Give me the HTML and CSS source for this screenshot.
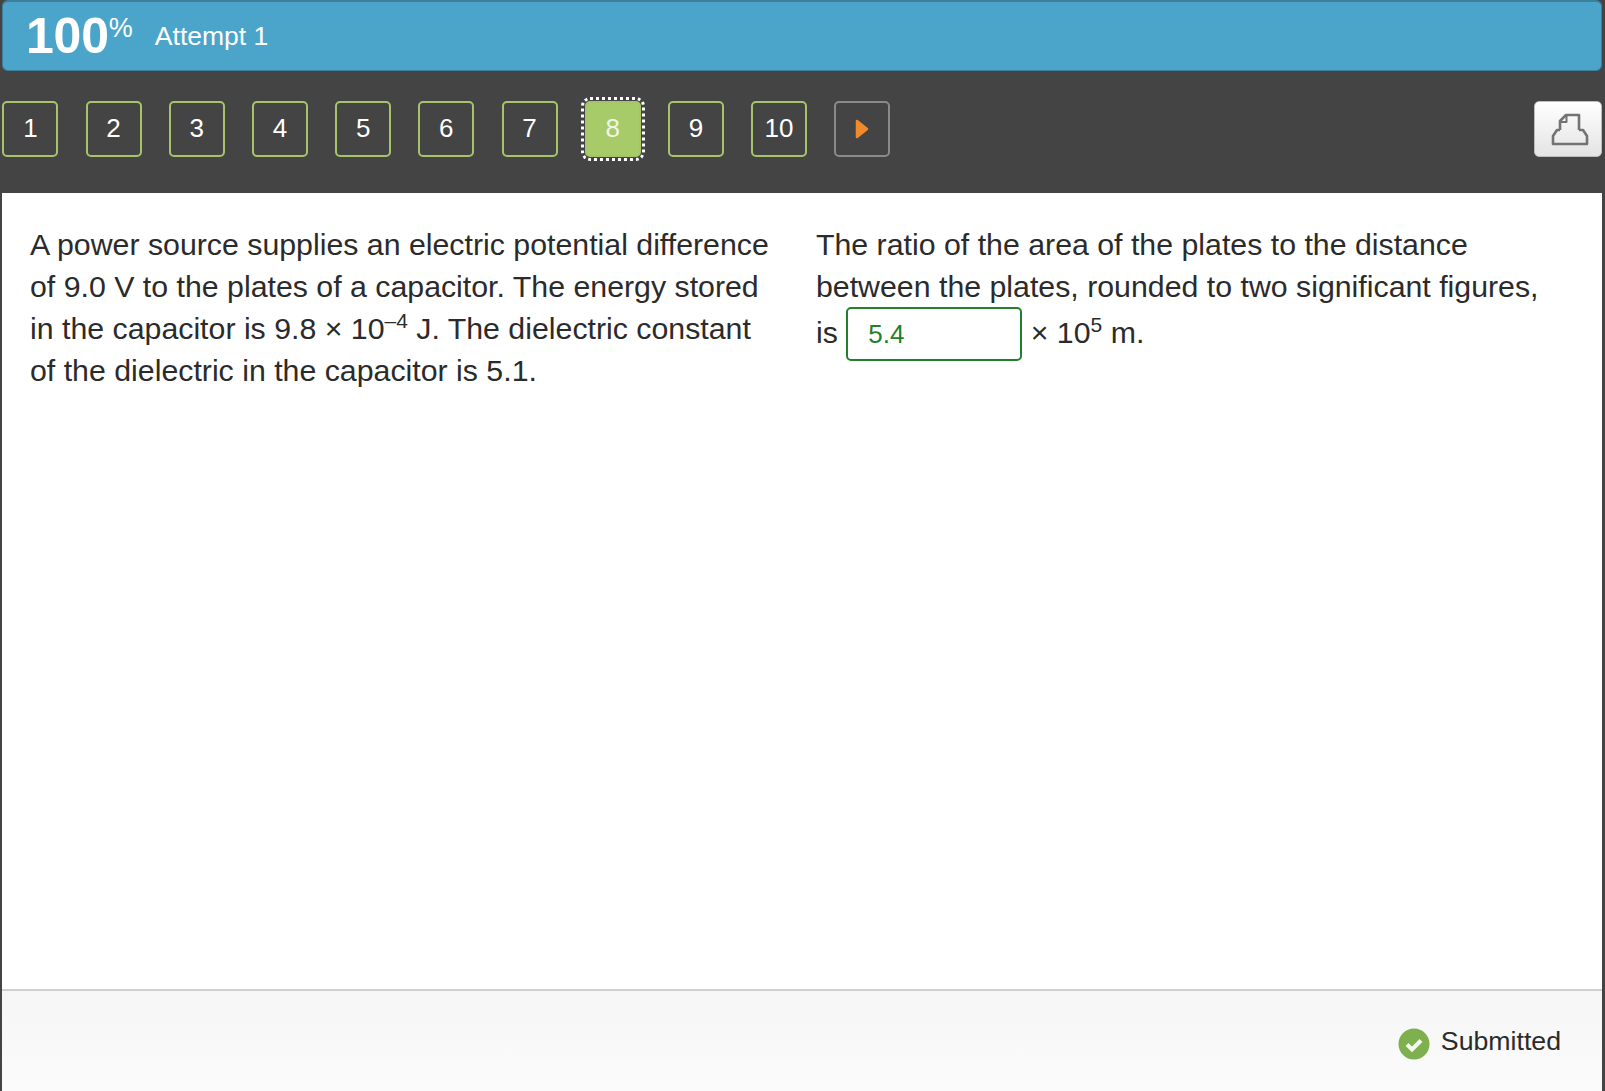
FILE: index.html
```html
<!DOCTYPE html>
<html lang="en">
<head>
    <meta charset="UTF-8">
    <meta name="viewport" content="width=device-width, initial-scale=1.0">
    <title>Attempt 1</title>
    <link rel="stylesheet" href="styles.css">
</head>
<body>
    <div class="score-bar">
        <div class="score">100<span class="score-unit">%</span></div>
        <div class="attempt">Attempt 1</div>
    </div>

    <div class="nav">
        <div class="pages">
            <button class="page">1</button>
            <button class="page">2</button>
            <button class="page">3</button>
            <button class="page">4</button>
            <button class="page">5</button>
            <button class="page">6</button>
            <button class="page">7</button>
            <button class="page current">8</button>
            <button class="page">9</button>
            <button class="page">10</button>
            <button class="page next" aria-label="Next">
                <svg width="14" height="20" viewBox="0 0 14 20"><path d="M2 2 L12 10 L2 18 Z" fill="#f08a2c" stroke="#f08a2c" stroke-width="2.5" stroke-linejoin="round"/></svg>
            </button>
        </div>
        <button class="print" aria-label="Print">
            <svg class="print-icon" width="38" height="33" viewBox="0 0 38 33" fill="none" stroke="#737373" stroke-width="2.6" stroke-linejoin="round">
                <path d="M9 17 V8 L15 2 H28 V17"/>
                <path d="M9 9 H15.5 V2" stroke-width="2"/>
                <path d="M9 17 H6 L2 23 V31 H36 V23 L32 17 H28"/>
            </svg>
        </button>
    </div>

    <div class="card">
        <div class="question">
            <p>A power source supplies an electric potential difference of 9.0 V to the plates of a capacitor. The energy stored in the capacitor is 9.8 × 10<sup>–4</sup> J. The dielectric constant of the dielectric in the capacitor is 5.1.</p>
            <p>The ratio of the area of the plates to the distance between the plates, rounded to two significant figures, is <span class="answer">5.4</span> × 10<sup>5</sup> m.</p>
        </div>
        <div class="footer">
            <svg class="check" width="32" height="32" viewBox="0 0 32 32">
                <circle cx="16" cy="16" r="15.5" fill="#7fb04f"/>
                <path d="M9 16.5 L14 21.5 L23 12.5" fill="none" stroke="#f4f8ee" stroke-width="4"/>
            </svg>
            <span>Submitted</span>
        </div>
    </div>
</body>
</html>
```

FILE: styles.css
```css
* {
    margin: 0;
    padding: 0;
    box-sizing: border-box;
}

html, body {
    height: 100%;
}

body {
    display: flex;
    flex-direction: column;
    background-color: #444444;
    color: #2b2b2b;
    font-family: "Liberation Sans", Arial, sans-serif;
    overflow: hidden;
}

.score-bar {
    display: flex;
    align-items: center;
    gap: 22px;
    height: 71px;
    margin: 0 3px 0 2px;
    padding: 0 23px;
    background-color: #4ba5ca;
    border: 1px solid #3e7f9c;
    border-top-width: 2px;
    border-radius: 6px;
    color: white;
}

.score {
    display: flex;
    align-items: flex-start;
    font-size: 50px;
    font-weight: bold;
    letter-spacing: -0.2px;
    line-height: 1;
}

.score-unit {
    margin-top: 4px;
    font-size: 27px;
    font-weight: normal;
    letter-spacing: 0;
}

.attempt {
    font-size: 26.5px;
}

.nav {
    display: flex;
    justify-content: space-between;
    align-items: flex-start;
    height: 122px;
    padding: 30px 3px 0 2.4px;
}

.pages {
    display: flex;
    gap: 27.2px;
}

.page {
    display: flex;
    align-items: center;
    justify-content: center;
    width: 56px;
    height: 56px;
    padding-bottom: 2px;
    background: none;
    border: 2px solid #a7c46c;
    border-radius: 5px;
    color: white;
    font-family: inherit;
    font-size: 26px;
}

.page.current {
    background-color: #a8cb6a;
    color: #f0f6e2;
    outline: 3px dotted white;
    outline-offset: 1px;
}

.page.next {
    padding-bottom: 0;
    border-color: #8a8a8a;
}

.print {
    display: flex;
    align-items: center;
    justify-content: center;
    width: 68px;
    height: 56px;
    background: linear-gradient(#ffffff, #e4e4e4);
    border: 1px solid #bdbdbd;
    border-radius: 5px;
}

.print-icon {
    margin-left: 4px;
}

.card {
    flex: 1;
    display: flex;
    flex-direction: column;
    margin: 0 3px 0 2px;
    background-color: white;
}

.question {
    flex: 1;
    display: grid;
    grid-template-columns: 750px 1fr;
    column-gap: 36px;
    padding: 31px 40px 0 28px;
    font-size: 30.3px;
    line-height: 42px;
}

sup {
    font-size: 21px;
    line-height: 0;
}

.answer {
    display: inline-block;
    width: 176px;
    height: 54px;
    margin: -1px 0 1px 0;
    padding: 0 20px;
    background-color: white;
    border: 2px solid #237f2c;
    border-radius: 5px;
    color: #237f2c;
    font-size: 26px;
    line-height: 50px;
    vertical-align: middle;
}

.footer {
    display: flex;
    justify-content: flex-end;
    align-items: center;
    gap: 11px;
    height: 102px;
    padding: 0 41px 0 0;
    background: linear-gradient(#f6f6f6, #fbfbfb);
    border-top: 2px solid #cfcfcf;
    font-size: 26.7px;
}

.check {
    margin-top: 5px;
}
```
